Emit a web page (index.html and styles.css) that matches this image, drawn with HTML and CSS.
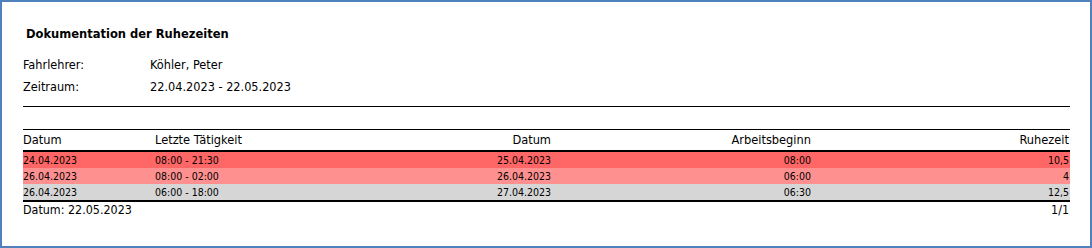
FILE: index.html
```html
<!DOCTYPE html>
<html lang="de">
<head>
<meta charset="utf-8">
<title>Dokumentation der Ruhezeiten</title>
<link rel="stylesheet" href="styles.css">
</head>
<body>
<div class="frame">
  <div class="title">Dokumentation der Ruhezeiten</div>
  <div class="info">
    <div class="label">Fahrlehrer:</div><div class="value">Köhler, Peter</div>
    <div class="label">Zeitraum:</div><div class="value">22.04.2023 - 22.05.2023</div>
  </div>
  <div class="rule"></div>
  <div class="table">
    <div class="row head">
      <div>Datum</div><div>Letzte Tätigkeit</div><div class="r">Datum</div><div class="r">Arbeitsbeginn</div><div class="r">Ruhezeit</div>
    </div>
    <div class="row data red">
      <div>24.04.2023</div><div>08:00 - 21:30</div><div class="r">25.04.2023</div><div class="r">08:00</div><div class="r">10,5</div>
    </div>
    <div class="row data pink">
      <div>26.04.2023</div><div>08:00 - 02:00</div><div class="r">26.04.2023</div><div class="r">06:00</div><div class="r">4</div>
    </div>
    <div class="row data gray">
      <div>26.04.2023</div><div>06:00 - 18:00</div><div class="r">27.04.2023</div><div class="r">06:30</div><div class="r">12,5</div>
    </div>
  </div>
  <div class="footer">
    <div>Datum: 22.05.2023</div><div>1/1</div>
  </div>
</div>
</body>
</html>
```
FILE: styles.css
```css
html, body {
  margin: 0;
  padding: 0;
  background: #ffffff;
}
body {
  font-family: "DejaVu Sans Condensed", "DejaVu Sans", sans-serif;
  font-stretch: semi-condensed;
  color: #000000;
}
.frame {
  box-sizing: border-box;
  width: 1092px;
  height: 248px;
  border: 2px solid #4f81bd;
  padding: 25px 20px 0 21px;
}
.title {
  font-family: "DejaVu Sans", sans-serif;
  font-stretch: normal;
  font-weight: bold;
  font-size: 11.5px;
  line-height: 14px;
  padding-left: 3px;
}
.info {
  display: grid;
  grid-template-columns: 127px 1fr;
  font-size: 12.6px;
  line-height: 21.5px;
  margin-top: 13px;
}
.rule {
  height: 1px;
  background: #000;
  margin-top: 9px;
}
.table {
  margin-top: 22px;
  border-top: 1px solid #000;
  border-bottom: 2px solid #000;
}
.row {
  display: grid;
  grid-template-columns: 132px 245px 151px 260px 1fr;
  padding-right: 1px;
}
.row .r {
  text-align: right;
}
.head {
  font-size: 12.7px;
  line-height: 20px;
  border-bottom: 2px solid #000;
}
.data {
  font-size: 10.5px;
  line-height: 16px;
  height: 16px;
}
.red { background: #ff6666; }
.pink { background: #ff9090; }
.gray { background: #d6d6d6; }
.footer {
  display: flex;
  justify-content: space-between;
  font-size: 12.4px;
  line-height: 16px;
  padding-right: 1px;
}
```
